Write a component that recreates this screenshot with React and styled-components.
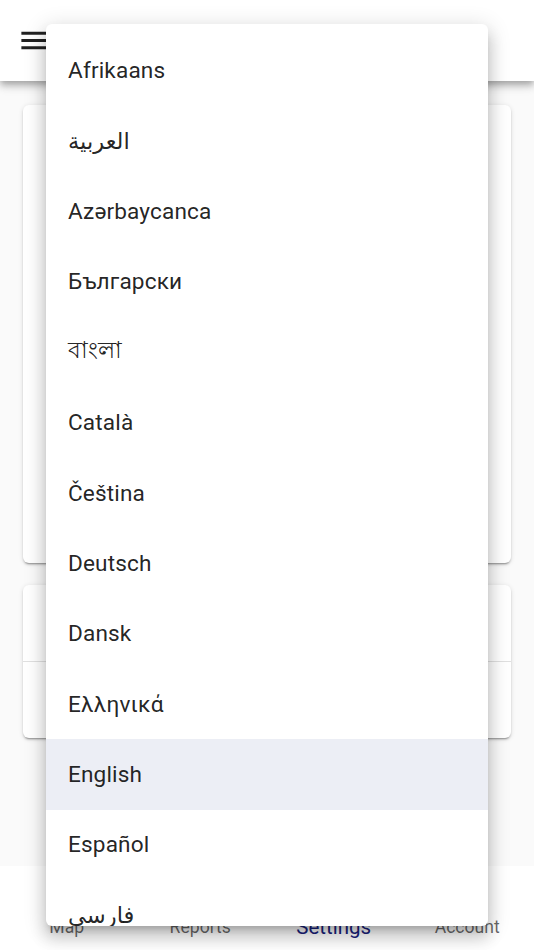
import React from "react";
import styled, { createGlobalStyle } from "styled-components";

const GlobalStyle = createGlobalStyle`
  html, body {
    margin: 0;
    padding: 0;
    background: #fafafa;
    font-family: Roboto, "Liberation Sans", "DejaVu Sans", sans-serif;
  }
`;

// only the part of the list that fits in the open popover
const languages = [
  "Afrikaans",
  "العربية",
  "Azərbaycanca",
  "Български",
  "বাংলা",
  "Català",
  "Čeština",
  "Deutsch",
  "Dansk",
  "Ελληνικά",
  "English",
  "Español",
  "فارسی",
];

const Page = styled.div`
  position: relative;
  width: 534px;
  height: 950px;
  display: flex;
  flex-direction: column;
  overflow: hidden;
  background: #fafafa;
`;

const AppBar = styled.header`
  height: 81px;
  flex-shrink: 0;
  display: flex;
  align-items: center;
  padding: 0 17px;
  box-sizing: border-box;
  background: #fff;
  box-shadow: 0px 3px 6px -1px rgba(0, 0, 0, 0.2),
    0px 6px 7px 0px rgba(0, 0, 0, 0.14), 0px 1px 15px 0px rgba(0, 0, 0, 0.12);
  z-index: 2;
`;

const IconButton = styled.button`
  width: 35px;
  height: 35px;
  padding: 0;
  border: none;
  background: none;
  display: flex;
  color: rgba(0, 0, 0, 0.87);
`;

const Content = styled.main`
  flex: 1;
  display: flex;
  flex-direction: column;
  gap: 22px;
  padding: 24px 23px;
`;

const Card = styled.section`
  background: #fff;
  border-radius: 6px;
  box-shadow: 0px 3px 1px -2px rgba(0, 0, 0, 0.2),
    0px 2px 2px 0px rgba(0, 0, 0, 0.14), 0px 1px 5px 0px rgba(0, 0, 0, 0.12);
  display: flex;
  flex-direction: column;
  height: ${(p) => p.$height}px;
`;

const CardRow = styled.div`
  flex: 1;
  & + & {
    border-top: 1.5px solid rgba(0, 0, 0, 0.12);
  }
`;

const BottomNav = styled.nav`
  height: 84px;
  flex-shrink: 0;
  display: flex;
  background: #fff;
`;

const NavAction = styled.div`
  flex: 1;
  display: flex;
  flex-direction: column;
  align-items: center;
  justify-content: center;
  gap: 2px;
  padding-top: 2px;
  color: ${(p) => (p.$active ? "#1a237e" : "rgba(0, 0, 0, 0.6)")};
  font-size: ${(p) => (p.$active ? "20.5px" : "17.6px")};
  line-height: 1.3;
`;

const Menu = styled.ul`
  position: absolute;
  top: 24px;
  left: 46px;
  width: 442px;
  height: 902px;
  margin: 0;
  padding: 11.5px 0 0;
  list-style: none;
  box-sizing: border-box;
  overflow: hidden;
  background: #fff;
  border-radius: 6px;
  box-shadow: 0px 7px 7px -4px rgba(0, 0, 0, 0.2),
    0px 12px 15px 2px rgba(0, 0, 0, 0.14), 0px 4px 21px 3px rgba(0, 0, 0, 0.12);
  z-index: 10;
`;

const MenuItem = styled.li`
  height: 70.4px;
  display: flex;
  align-items: center;
  padding: 0 22px;
  font-size: 22.6px;
  letter-spacing: 0.15px;
  color: rgba(0, 0, 0, 0.87);
  background: ${(p) => (p.$selected ? "#eceef5" : "transparent")};
`;

function NavIcon({ d }) {
  return (
    <svg width="35" height="35" viewBox="0 0 24 24" fill="currentColor">
      <path d={d} />
    </svg>
  );
}

const navItems = [
  {
    label: "Map",
    d: "M20.5 3l-.16.03L15 5.1 9 3 3.36 4.9c-.21.07-.36.25-.36.48V20.5c0 .28.22.5.5.5l.16-.03L9 18.9l6 2.1 5.64-1.9c.21-.07.36-.25.36-.48V3.5c0-.28-.22-.5-.5-.5zM15 19l-6-2.11V5l6 2.11V19z",
  },
  {
    label: "Reports",
    d: "M19 3H5c-1.1 0-2 .9-2 2v14c0 1.1.9 2 2 2h14c1.1 0 2-.9 2-2V5c0-1.1-.9-2-2-2zM9 17H7v-7h2v7zm4 0h-2V7h2v10zm4 0h-2v-4h2v4z",
  },
  {
    label: "Settings",
    active: true,
    d: "M19.14 12.94c.04-.3.06-.61.06-.94 0-.32-.02-.64-.07-.94l2.03-1.58c.18-.14.23-.41.12-.61l-1.92-3.32c-.12-.22-.37-.29-.59-.22l-2.39.96c-.5-.38-1.03-.7-1.62-.94l-.36-2.54c-.04-.24-.24-.41-.48-.41h-3.84c-.24 0-.43.17-.47.41l-.36 2.54c-.59.24-1.130.57-1.62.94l-2.39-.96c-.22-.08-.47 0-.59.22L2.74 8.870c-.12.21-.08.47.12.61l2.03 1.58c-.05.3-.09.63-.09.94s.02.64.07.94l-2.030 1.58c-.18.14-.23.41-.12.61l1.92 3.32c.12.22.37.29.59.22l2.39-.96c.5.38 1.03.7 1.62.94l.36 2.54c.05.24.24.41.48.41h3.84c.24 0 .44-.17.47-.41l.36-2.54c.59-.24 1.13-.56 1.62-.94l2.39.96c.22.08.47 0 .59-.22l1.92-3.32c.12-.22.07-.47-.12-.61l-2.01-1.58zM12 15.6c-1.98 0-3.6-1.62-3.6-3.6s1.62-3.6 3.6-3.6 3.6 1.62 3.6 3.6-1.62 3.6-3.6 3.6z",
  },
  {
    label: "Account",
    d: "M12 2C6.48 2 2 6.48 2 12s4.48 10 10 10 10-4.48 10-10S17.52 2 12 2zm0 4c1.93 0 3.5 1.57 3.5 3.5S13.93 13 12 13s-3.5-1.57-3.5-3.5S10.07 6 12 6zm0 14c-2.03 0-4.43-.82-6.14-2.88C7.55 15.8 9.680 15 12 15s4.45.8 6.14 2.12C16.43 19.18 14.03 20 12 20z",
  },
];

export default function App() {
  return (
    <Page>
      <GlobalStyle />
      <AppBar>
        <IconButton aria-label="menu">
          <svg width="35" height="35" viewBox="0 0 24 24" fill="currentColor">
            <path d="M3 18h18v-2H3v2zm0-5h18v-2H3v2zm0-7v2h18V6H3z" />
          </svg>
        </IconButton>
      </AppBar>
      <Content>
        <Card $height={458}>
          <CardRow />
        </Card>
        <Card $height={153}>
          <CardRow />
          <CardRow />
        </Card>
      </Content>
      <BottomNav>
        {navItems.map((item) => (
          <NavAction key={item.label} $active={item.active}>
            <NavIcon d={item.d} />
            <span>{item.label}</span>
          </NavAction>
        ))}
      </BottomNav>
      <Menu role="listbox">
        {languages.map((lang) => (
          <MenuItem key={lang} $selected={lang === "English"}>
            {lang}
          </MenuItem>
        ))}
      </Menu>
    </Page>
  );
}
